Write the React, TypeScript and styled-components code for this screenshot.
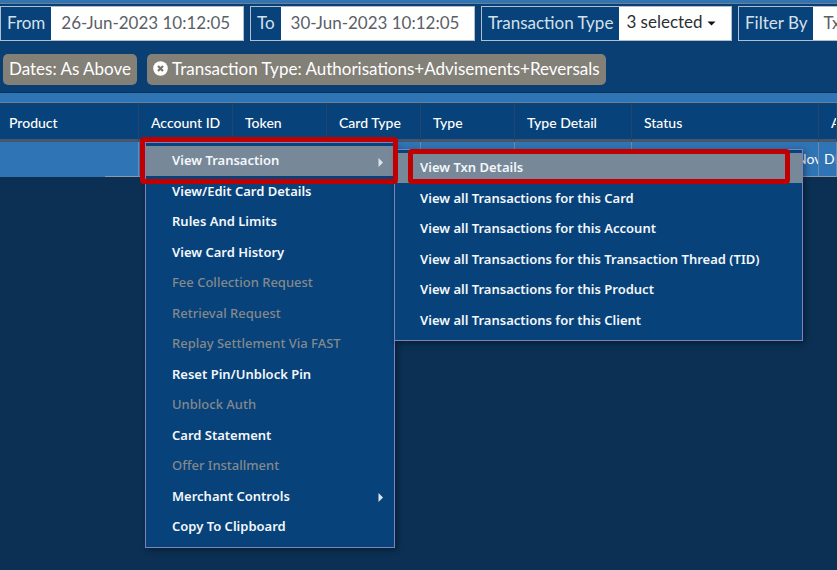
import React from "react";
import styled, { createGlobalStyle } from "styled-components";

const navy = "#07427a";
const sky = "#2f74b5";
const night = "#0b3054";
const uiFont = `Lato, "Noto Sans", sans-serif`;
const menuFont = `"Noto Sans", "Open Sans", sans-serif`;

const GlobalStyle = createGlobalStyle`
  *, *::before, *::after { box-sizing: border-box; }
  body { margin: 0; background: ${night}; }
  button, input { font: inherit; color: inherit; }
`;

const Page = styled.div`
  min-height: 100vh;
  overflow: hidden;
  background: ${night};
  color: #fff;
  font-family: ${uiFont};
`;

const Strip = styled.div<{ $size: number }>`
  height: ${(p) => p.$size}px;
  background: ${sky};
  border-bottom: 1px solid #6d7f90;
`;

const FilterArea = styled.form`
  background: #093f73;
  padding-top: 2px;
  border-bottom: 1px solid #08335f;
`;

const FieldBar = styled.div`
  display: flex;
  gap: 6px;
  height: 35px;
  white-space: nowrap;
  font-size: 17px;
`;

const Field = styled.div<{ $width: number }>`
  display: flex;
  flex: 0 0 ${(p) => p.$width}px;
  min-width: 0;
  border: 1px solid #aebfd2;
`;

const FieldLabel = styled.label`
  display: flex;
  align-items: center;
  padding: 0 6px 2px;
  background: ${navy};
  color: #d6e0ea;
`;

const DateInput = styled.input`
  flex: 1;
  min-width: 0;
  border: 0;
  padding: 0 10px 2px;
  background: #fff;
  color: #5b5f66;
`;

const PickerButton = styled.button`
  flex: 1;
  display: flex;
  align-items: center;
  gap: 4px;
  border: 0;
  padding: 0 7px 4px;
  background: #fff;
  color: #2b2f34;
`;

const Chips = styled.div`
  display: flex;
  gap: 10px;
  padding: 13px 3px 7px;
`;

const Chip = styled.span`
  display: flex;
  align-items: center;
  gap: 4px;
  height: 31px;
  padding: 0 6px 2px;
  border-radius: 5px;
  background: #828077;
  font-size: 17px;
  white-space: nowrap;
`;

const ChipRemove = styled.button`
  display: flex;
  padding: 0;
  border: 0;
  background: none;
`;

const Grid = styled.table`
  width: 100%;
  table-layout: fixed;
  border-collapse: separate;
  border-spacing: 0;
`;

const Column = styled.col<{ $width?: number }>`
  width: ${(p) => (p.$width ? `${p.$width}px` : "auto")};
`;

const HeadCell = styled.th<{ $first?: boolean }>`
  height: 39px;
  padding: 2px 0 0 ${(p) => (p.$first ? 9 : 12)}px;
  background: ${navy};
  border-right: 1px solid #24446a;
  border-bottom: 3px solid #47566b;
  font-size: 14px;
  font-weight: 500;
  text-align: left;
  white-space: nowrap;
  overflow: hidden;
`;

const Cell = styled.td<{ $indent?: number; $anchor?: boolean }>`
  position: ${(p) => (p.$anchor ? "relative" : "static")};
  height: 35px;
  padding: 0 0 2px ${(p) => p.$indent ?? 0}px;
  background: ${sky};
  border-right: 1px solid #6f8aa6;
  border-bottom: 1px solid #8e9aa8;
  font-size: 14px;
  white-space: nowrap;
  overflow: ${(p) => (p.$anchor ? "visible" : "hidden")};
`;

const MaskedCell = styled(Cell)`
  padding: 0;
  border-bottom: 0;
`;

const Mask = styled.div`
  height: 35px;
  margin-left: 105px;
  border-bottom: 1px solid #8e9aa8;
`;

const Menu = styled.ul<{ $sub?: boolean }>`
  position: absolute;
  z-index: 1;
  top: ${(p) => (p.$sub ? 7 : 0)}px;
  left: ${(p) => (p.$sub ? 255 : 6)}px;
  width: ${(p) => (p.$sub ? 409 : 250)}px;
  margin: 0;
  padding: 3px 0 ${(p) => (p.$sub ? 4 : 5)}px;
  list-style: none;
  display: grid;
  grid-auto-rows: 30px 31px;
  background: ${navy};
  border: 1px solid #7f83bd;
  box-shadow: 2px 2px 6px rgba(0, 0, 0, 0.4);
  font-family: ${menuFont};
  font-size: 13px;
  font-weight: 600;
`;

const MenuItem = styled.button<{ $active?: boolean; $sub?: boolean }>`
  display: flex;
  align-items: center;
  justify-content: space-between;
  width: 100%;
  height: 100%;
  padding: 0 11px 2px ${(p) => (p.$sub ? 25 : 26)}px;
  border: 0;
  background: ${(p) => (p.$active ? "#778899" : "transparent")};
  color: #f4f7fa;
  text-align: left;
  white-space: nowrap;
  &:disabled { color: #84898c; font-weight: 500; }
`;

const Callout = styled.div<{ $sub?: boolean }>`
  position: absolute;
  z-index: 2;
  top: ${(p) => (p.$sub ? 7 : -5)}px;
  left: ${(p) => (p.$sub ? 269 : 1)}px;
  width: ${(p) => (p.$sub ? 382 : 258)}px;
  height: ${(p) => (p.$sub ? 35 : 47)}px;
  border: 5px solid #c00000;
  border-radius: 4px;
  pointer-events: none;
`;

const Caret = () => (
  <svg width="9" height="5" viewBox="0 0 9 5" aria-hidden="true">
    <path d="M0.5 0.5h8L4.5 4.5z" fill="#111" />
  </svg>
);

const CaretSlot = styled.span`
  display: flex;
  padding-top: 4px;
`;

const ArrowSlot = styled.span`
  display: flex;
  padding-top: 4px;
`;

const Arrow = () => (
  <ArrowSlot>
    <svg width="5" height="9" viewBox="0 0 5 9" aria-hidden="true">
      <path d="M0.5 0v9L5 4.5z" fill="#dde3ea" />
    </svg>
  </ArrowSlot>
);

const CloseIcon = () => (
  <svg width="15" height="15" viewBox="0 0 15 15" aria-hidden="true">
    <circle cx="7.5" cy="7.5" r="7.3" fill="#fff" />
    <path d="M5 5l5 5M10 5l-5 5" stroke="#77756c" strokeWidth="2.2" />
  </svg>
);

const columns: [string, number?][] = [
  ["Product", 139],
  ["Account ID", 94],
  ["Token", 94],
  ["Card Type", 94],
  ["Type", 94],
  ["Type Detail", 117],
  ["Status", 187],
  ["Amount"],
];

type Entry = { label: string; disabled?: boolean; active?: boolean; more?: boolean };

const rowMenu: Entry[] = [
  { label: "View Transaction", active: true, more: true },
  { label: "View/Edit Card Details" },
  { label: "Rules And Limits" },
  { label: "View Card History" },
  { label: "Fee Collection Request", disabled: true },
  { label: "Retrieval Request", disabled: true },
  { label: "Replay Settlement Via FAST", disabled: true },
  { label: "Reset Pin/Unblock Pin" },
  { label: "Unblock Auth", disabled: true },
  { label: "Card Statement" },
  { label: "Offer Installment", disabled: true },
  { label: "Merchant Controls", more: true },
  { label: "Copy To Clipboard" },
];

const viewMenu: Entry[] = [
  { label: "View Txn Details", active: true },
  { label: "View all Transactions for this Card" },
  { label: "View all Transactions for this Account" },
  { label: "View all Transactions for this Transaction Thread (TID)" },
  { label: "View all Transactions for this Product" },
  { label: "View all Transactions for this Client" },
];

const ContextMenu = ({ entries, sub }: { entries: Entry[]; sub?: boolean }) => (
  <Menu $sub={sub}>
    {entries.map((e) => (
      <li key={e.label}>
        <MenuItem type="button" $sub={sub} $active={e.active} disabled={e.disabled}>
          {e.label}
          {e.more && <Arrow />}
        </MenuItem>
      </li>
    ))}
  </Menu>
);

export default function App() {
  return (
    <Page>
      <GlobalStyle />
      <Strip $size={4} />
      <FilterArea>
        <FieldBar>
          <Field $width={244}>
            <FieldLabel htmlFor="from">From</FieldLabel>
            <DateInput id="from" defaultValue="26-Jun-2023 10:12:05" />
          </Field>
          <Field $width={225}>
            <FieldLabel htmlFor="to">To</FieldLabel>
            <DateInput id="to" defaultValue="30-Jun-2023 10:12:05" />
          </Field>
          <Field $width={251}>
            <FieldLabel htmlFor="kind">Transaction Type</FieldLabel>
            <PickerButton id="kind" type="button">
              3 selected
              <CaretSlot>
                <Caret />
              </CaretSlot>
            </PickerButton>
          </Field>
          <Field $width={250}>
            <FieldLabel htmlFor="filter">Filter By</FieldLabel>
            <DateInput id="filter" defaultValue="Txn ID" />
          </Field>
        </FieldBar>
        <Chips>
          <Chip>Dates: As Above</Chip>
          <Chip>
            <ChipRemove type="button" aria-label="Remove transaction type filter">
              <CloseIcon />
            </ChipRemove>
            Transaction Type: Authorisations+Advisements+Reversals
          </Chip>
        </Chips>
      </FilterArea>
      <Strip $size={10} />
      <Grid>
        <colgroup>
          {columns.map(([name, width]) => (
            <Column key={name} $width={width} />
          ))}
        </colgroup>
        <thead>
          <tr>
            {columns.map(([name], i) => (
              <HeadCell key={name} scope="col" $first={i === 0}>
                {name}
              </HeadCell>
            ))}
          </tr>
        </thead>
        <tbody>
          <tr>
            <MaskedCell>
              <Mask />
            </MaskedCell>
            <Cell $anchor>
              <ContextMenu entries={rowMenu} />
              <ContextMenu entries={viewMenu} sub />
              <Callout />
              <Callout $sub />
            </Cell>
            <Cell />
            <Cell />
            <Cell />
            <Cell />
            <Cell $indent={164}>Nov</Cell>
            <Cell $indent={5}>DF</Cell>
          </tr>
        </tbody>
      </Grid>
    </Page>
  );
}
